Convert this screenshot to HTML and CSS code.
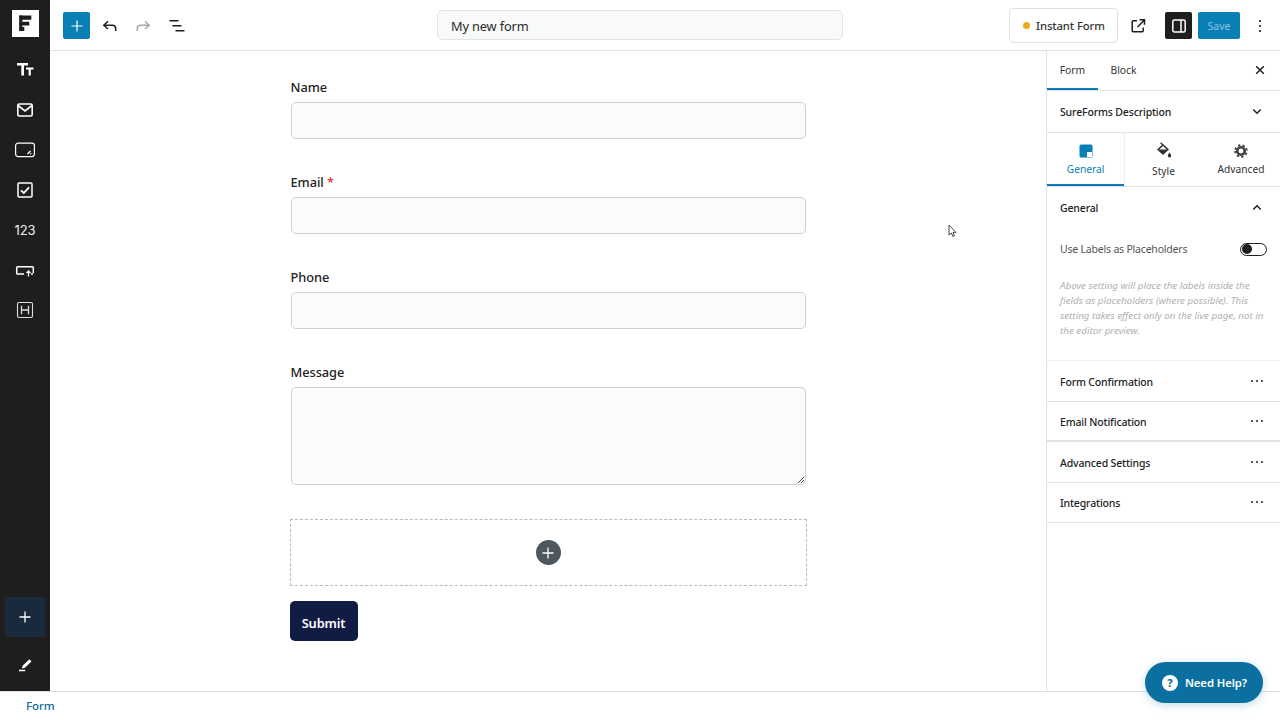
FILE: index.html
```html
<!DOCTYPE html>
<html lang="en">
<head>
<meta charset="utf-8">
<title>My new form</title>
<link rel="stylesheet" href="styles.css">
</head>
<body>
<div class="app">
  <div class="main">
    <nav class="rail">
      <div class="logo"><svg width="27" height="27" viewBox="0 0 27 27"><rect width="27" height="27" fill="#fff"/><path d="M7.300 5.500h12v4.300h-12zM7.300 11.800h10v3.600h-10zM7.300 17h5v4h-5z" fill="#1e1e1e"/><path d="M7.300 5.500h3v15.500h-3z" fill="#1e1e1e"/></svg></div>
      <div class="rail-list">
        <div class="rail-item"><svg class="tt" width="20" height="20" viewBox="0 0 20 20" fill="#fff"><path d="M2 4h11v2.500H9v10H6.300v-10H2z"/><path d="M11 8.500h7.500v2h-2.700v6h-2.200v-6H11z"/></svg></div>
        <div class="rail-item"><svg width="20" height="20" viewBox="0 0 20 20" fill="none" stroke="#fff" stroke-width="1.600"><rect x="2.800" y="4" width="14.400" height="12" rx="1.500"/><path d="M3 5.500l7 5.500 7-5.500"/></svg></div>
        <div class="rail-item"><svg width="20" height="20" viewBox="0 0 20 20" fill="none" stroke="#fff" stroke-width="1.200"><rect x="0.600" y="3.100" width="18.800" height="13.500" rx="2.500"/><path d="M12.500 14l3-3" stroke-width="1.400"/><path d="M15.300 14.300l1-1"/></svg></div>
        <div class="rail-item"><svg width="20" height="20" viewBox="0 0 20 20" fill="none" stroke="#fff" stroke-width="1.500"><rect x="3" y="3" width="14" height="14" rx="1"/><path d="M6 10.300l2.800 2.700L14 7.300" stroke-width="1.800"/></svg></div>
        <div class="rail-item rail-num">123</div>
        <div class="rail-item"><svg width="20" height="20" viewBox="0 0 20 20" fill="none" stroke="#fff" stroke-width="1.500"><path d="M9 14H2.500a.8.800 0 0 1-.8-.8V7.500a.8.800 0 0 1 .8-.8h15a.8.800 0 0 1 .8.800v5.500"/><path d="M13.500 16.500v-5M11.500 13l2-2 2 2M16 14h2" stroke-width="1.300"/></svg></div>
        <div class="rail-item"><svg width="20" height="20" viewBox="0 0 20 20" fill="none" stroke="#ddd" stroke-width="1.100"><rect x="2.500" y="2.500" width="15" height="15" rx="1.500"/><path d="M6.500 5.800v8.400M13.500 5.800v8.400M6.500 10h7" stroke-width="1.300"/></svg></div>
      </div>
      <div class="rail-add"><svg width="14" height="14" viewBox="0 0 14 14" stroke="#fff" stroke-width="1.300"><path d="M7 1.500v11M1.500 7h11"/></svg></div>
      <div class="rail-pen"><svg width="20" height="20" viewBox="0 0 20 20" fill="#fff"><path d="M7.800 10.500l6.700-6.300 2 2.200-6.600 6.400-3 .8zM4 14.800h6.200v1.400H4z"/></svg></div>
    </nav>
    <div class="work">
      <header class="topbar">
        <div class="tools">
          <div class="btn-add"><svg width="14" height="14" viewBox="0 0 14 14" stroke="#fff" stroke-width="1.200"><path d="M7 1.500v11M1.500 7h11"/></svg></div>
          <div class="tool"><svg width="20" height="20" viewBox="0 0 20 20" fill="none" stroke="#1e1e1e" stroke-width="1.500"><path d="M8 5.200L3.800 9.200 8 13"/><path d="M4 9.200h8.500a3.200 3.200 0 0 1 3.200 3.200V15"/></svg></div>
          <div class="tool"><svg width="20" height="20" viewBox="0 0 20 20" fill="none" stroke="#a8a8a8" stroke-width="1.500"><path d="M12 5.200l4.200 4L12 13"/><path d="M16 9.200H7.500a3.200 3.200 0 0 0-3.200 3.200V15"/></svg></div>
          <div class="tool"><svg width="20" height="20" viewBox="0 0 20 20" stroke="#1e1e1e" stroke-width="1.500"><path d="M2.500 4.800h9M5.500 9.800h9M8.500 14.800h9"/></svg></div>
        </div>
        <div class="title">My new form</div>
        <div class="actions">
          <div class="instant"><span class="dot"></span>Instant Form</div>
          <div class="act-ext"><svg width="20" height="20" viewBox="0 0 20 20" fill="none" stroke="#1e1e1e" stroke-width="1.500"><path d="M9 4.800H5.200a1 1 0 0 0-1 1v9a1 1 0 0 0 1 1h9a1 1 0 0 0 1-1V11.500"/><path d="M9.500 11L16 4.500M11.500 3.800h5v5"/></svg></div>
          <div class="act-panel"><svg width="18" height="18" viewBox="0 0 18 18" fill="none" stroke="#fff" stroke-width="1.500"><rect x="2.800" y="3" width="12.400" height="12" rx="1.500"/><path d="M11 3v12"/></svg></div>
          <div class="save">Save</div>
          <div class="more"><svg width="4" height="14" viewBox="0 0 4 14" fill="#1e1e1e"><circle cx="2" cy="2" r="1.100"/><circle cx="2" cy="7" r="1.100"/><circle cx="2" cy="12" r="1.100"/></svg></div>
        </div>
      </header>
      <div class="body">
        <section class="canvas">
          <div class="form">
            <div class="field"><div class="label">Name</div><div class="input"></div></div>
            <div class="field"><div class="label">Email <span class="req">*</span></div><div class="input"></div></div>
            <div class="field"><div class="label">Phone</div><div class="input"></div></div>
            <div class="field field-last"><div class="label">Message</div><div class="input area"><svg class="grip" width="8" height="8" viewBox="0 0 8 8" stroke="#444" stroke-width="1"><path d="M1 7l6-6M4 7l3-3"/></svg></div></div>
            <div class="dropzone"><div class="drop-btn"><svg width="14" height="14" viewBox="0 0 14 14" stroke="#fff" stroke-width="1.300"><path d="M7 1.500v11M1.500 7h11"/></svg></div></div>
            <div class="submit">Submit</div>
          </div>
          <svg class="cursor" width="10" height="14" viewBox="0 0 10 14"><path d="M1 1v10l2.400-2 1.500 3.500 1.500-.7L5 8.400h3z" fill="#fff" stroke="#333" stroke-width=".9"/></svg>
        </section>
        <aside class="panel">
          <div class="ptabs">
            <div class="ptab ptab-on">Form</div>
            <div class="ptab">Block</div>
            <svg class="pclose" width="10" height="10" viewBox="0 0 10 10" stroke="#1e1e1e" stroke-width="1.500"><path d="M1.200 1.200l7.600 7.600M8.800 1.200L1.200 8.800"/></svg>
          </div>
          <div class="prow prow-desc"><span class="prow-t">SureForms Description</span><svg width="10" height="7" viewBox="0 0 12 8" fill="none" stroke="#1e1e1e" stroke-width="1.700"><path d="M1.500 1.500L6 6l4.500-4.500"/></svg></div>
          <div class="stabs">
            <div class="stab stab-on"><svg width="16" height="16" viewBox="0 0 16 16"><rect x="1.500" y="1.500" width="13" height="13" rx="1.500" fill="#0a7fb5"/><rect x="9" y="9" width="5" height="5" fill="#fff"/></svg><span>General</span></div>
            <div class="stab stab-style"><svg width="16" height="18" viewBox="0 0 16 18"><path d="M1 7.500L7 2l6 5.500L7 13z" fill="#333"/><path d="M3.200 7.500L7 4l3.800 3.500z" fill="#fff"/><path d="M4.500 .8L7 3" stroke="#333" stroke-width="1.300"/><path d="M13.500 10.500c1 1.500 1.700 2.400 1.700 3.300a1.700 1.700 0 0 1-3.400 0c0-.9.700-1.800 1.700-3.300z" fill="#333"/></svg><span>Style</span></div>
            <div class="stab stab-adv"><svg class="gear" width="14" height="14" viewBox="0 0 16 16"><circle cx="8" cy="8" r="4.300" fill="none" stroke="#444" stroke-width="3"/><path d="M8 8m-6.600 0a6.600 6.600 0 1 0 13.200 0a6.600 6.600 0 1 0-13.200 0" fill="none" stroke="#444" stroke-width="2.300" stroke-dasharray="2.500 2.700"/></svg><span>Advanced</span></div>
          </div>
          <div class="general">
            <div class="gen-head"><span class="prow-t">General</span><svg width="10" height="7" viewBox="0 0 12 8" fill="none" stroke="#1e1e1e" stroke-width="1.700"><path d="M1.500 6.500L6 2l4.500 4.500"/></svg></div>
            <div class="gen-toggle"><span>Use Labels as Placeholders</span><span class="toggle"><span class="knob"></span></span></div>
            <p class="gen-note">Above setting will place the labels inside the fields as placeholders (where possible). This setting takes effect only on the live page, not in the editor preview.</p>
          </div>
          <div class="prow"><span class="prow-t">Form Confirmation</span><svg class="dots" width="14" height="4" viewBox="0 0 14 4" fill="#333"><circle cx="2" cy="2" r="1.100"/><circle cx="7" cy="2" r="1.100"/><circle cx="12" cy="2" r="1.100"/></svg></div>
          <div class="prow prow-thick"><span class="prow-t">Email Notification</span><svg class="dots" width="14" height="4" viewBox="0 0 14 4" fill="#333"><circle cx="2" cy="2" r="1.100"/><circle cx="7" cy="2" r="1.100"/><circle cx="12" cy="2" r="1.100"/></svg></div>
          <div class="prow"><span class="prow-t">Advanced Settings</span><svg class="dots" width="14" height="4" viewBox="0 0 14 4" fill="#333"><circle cx="2" cy="2" r="1.100"/><circle cx="7" cy="2" r="1.100"/><circle cx="12" cy="2" r="1.100"/></svg></div>
          <div class="prow"><span class="prow-t">Integrations</span><svg class="dots" width="14" height="4" viewBox="0 0 14 4" fill="#333"><circle cx="2" cy="2" r="1.100"/><circle cx="7" cy="2" r="1.100"/><circle cx="12" cy="2" r="1.100"/></svg></div>
        </aside>
      </div>
    </div>
  </div>
  <footer class="footer">Form</footer>
  <div class="help"><span class="help-ico">?</span>Need Help?</div>
</div>
</body>
</html>
```
FILE: styles.css
```css
* { box-sizing: border-box; }
html, body { margin: 0; padding: 0; }
body { font-family: "Noto Sans", "Open Sans", sans-serif; color: #1e1e1e; background: #fff; }
svg { display: block; flex: none; }

.app { position: relative; width: 1280px; height: 720px; display: flex; flex-direction: column; overflow: hidden; }
.main { flex: 1; display: flex; min-height: 0; }

.rail { width: 50px; background: #1e1e1e; display: flex; flex-direction: column; align-items: center; padding-top: 10px; flex: none; }
.logo { width: 27px; height: 27px; margin-bottom: 13px; }
.rail-list { display: flex; flex-direction: column; flex: 1; }
.rail-item { width: 50px; height: 40px; display: flex; align-items: center; justify-content: center; }
.tt { margin-top: -2px; }
.rail-num { color: #eee; font: 400 13px "Inter", sans-serif; }
.rail-add { width: 40px; height: 40px; background: #1a2a3d; display: flex; align-items: center; justify-content: center; }
.rail-pen { height: 44px; margin-top: 6px; margin-bottom: 4px; display: flex; align-items: center; justify-content: center; }

.work { flex: 1; display: flex; flex-direction: column; min-width: 0; }
.topbar { height: 51px; flex: none; border-bottom: 1px solid #e0e0e0; display: flex; align-items: center; padding: 1px 18px 0 13px; }
.tools { width: 374px; flex: none; display: flex; align-items: center; }
.btn-add { width: 27px; height: 27px; background: #0a7fb5; border-radius: 2px; display: flex; align-items: center; justify-content: center; margin-right: 3px; }
.tool { width: 33.500px; display: flex; justify-content: center; }
.title { width: 406px; height: 30px; flex: none; margin-top: -1px; background: #f8f9f9; border: 1px solid #e2e4e4; border-radius: 6px; padding-left: 13px; font-size: 12.800px; letter-spacing: -.15px; line-height: 30px; color: #2a2a2a; }
.actions { flex: 1; display: flex; align-items: center; justify-content: flex-end; }
.instant { height: 35px; width: 109px; border: 1px solid #e0e0e0; border-radius: 4px; display: flex; align-items: center; padding-left: 13px; font-size: 11.300px; letter-spacing: -.1px; font-weight: 500; color: #333; margin-right: 10px; white-space: nowrap; }
.dot { width: 7px; height: 7px; border-radius: 50%; background: #e9ab17; margin-right: 6px; flex: none; }
.act-ext { width: 20px; margin-right: 17px; }
.act-panel { width: 27px; height: 27px; background: #1e1e1e; border-radius: 2px; display: flex; align-items: center; justify-content: center; margin-right: 6px; }
.save { width: 42px; height: 27px; background: #0a7fb5; border-radius: 2px; color: #8fc3dc; font-size: 10.500px; display: flex; align-items: center; justify-content: center; margin-right: 18px; }
.more { width: 4px; }

.body { flex: 1; display: flex; min-height: 0; }
.canvas { position: relative; flex: 1; display: flex; justify-content: center; min-width: 0; }
.form { width: 517px; padding-top: 25px; }
.field { padding: 0 1px; margin-bottom: 32px; }
.field-last { margin-bottom: 34px; }
.label { font-size: 12.800px; letter-spacing: -.05px; font-weight: 500; line-height: 22px; color: #222; margin-bottom: 4px; }
.req { color: #d32f2f; }
.input { height: 37px; background: #fafbfb; border: 1px solid #d0d0d0; border-radius: 5px; }
.area { height: 98px; position: relative; }
.grip { position: absolute; right: 0; bottom: 0; }
.dropzone { height: 67px; border: 1px dashed #bbb; display: flex; align-items: center; justify-content: center; margin-bottom: 15px; }
.drop-btn { width: 25px; height: 25px; border-radius: 50%; background: #50565e; display: flex; align-items: center; justify-content: center; }
.submit { width: 68px; height: 40px; background: #111c44; color: #fff; border-radius: 5px; font-size: 12.800px; letter-spacing: -.1px; font-weight: 600; display: flex; align-items: center; justify-content: center; padding-top: 3px; }
.cursor { position: absolute; left: 898px; top: 173px; }

.panel { width: 234px; flex: none; border-left: 1px solid #e0e0e0; display: flex; flex-direction: column; }
.ptabs { height: 40px; border-bottom: 1px solid #e0e0e0; display: flex; align-items: stretch; position: relative; flex: none; }
.ptab { width: 51px; padding-bottom: 2px; font-size: 10.300px; color: #333; display: flex; align-items: center; justify-content: center; }
.ptab-on { box-shadow: inset 0 -2px 0 #0a7fb5; }
.pclose { position: absolute; right: 15px; top: 14px; }
.prow { height: 40.500px; border-bottom: 1px solid #e4e4e4; display: flex; align-items: center; justify-content: space-between; padding: 2px 16px 0 13px; flex: none; }
.prow-desc { height: 42px; padding: 0 18px 0 13px; }
.prow-thick { border-bottom-width: 2px; }
.prow-t { font-size: 10.500px; letter-spacing: -.15px; font-weight: 500; color: #222; }
.dots { margin-top: -2px; }
.stabs { height: 54px; display: flex; border-bottom: 1px solid #e0e0e0; flex: none; }
.stab { width: 78px; display: flex; flex-direction: column; align-items: center; padding-top: 10px; gap: 3px; font-size: 10.200px; color: #333; }
.stab-on { width: 77px; color: #0a7fb5; box-shadow: inset 0 -2px 0 #0a7fb5; }
.stab-style { padding-top: 9px; gap: 4px; border-left: 1px solid #eee; }
.gear { margin: 1px 0; }
.general { height: 174px; border-bottom: 1px solid #f0f0f0; flex: none; padding: 0 13px; }
.gen-head { height: 41px; display: flex; align-items: center; justify-content: space-between; padding-right: 5px; }
.gen-toggle { height: 16px; margin-top: 13px; display: flex; align-items: center; justify-content: space-between; font-size: 10.500px; letter-spacing: -.2px; color: #555; }
.toggle { width: 27px; height: 13px; border: 1px solid #1e1e1e; border-radius: 7px; display: flex; align-items: center; padding-left: 1px; }
.knob { width: 10px; height: 10px; background: #1e1e1e; border-radius: 50%; }
.gen-note { margin: 21px 0 0; font-size: 9.800px; line-height: 15px; font-style: italic; color: #b0b0b0; }

.footer { height: 29px; flex: none; border-top: 1px solid #e0e0e0; padding-left: 26px; font-size: 11.500px; letter-spacing: -.1px; font-weight: 500; line-height: 27px; color: #0f6a9a; }
.help { position: absolute; left: 1145px; top: 662px; width: 118px; height: 41px; border-radius: 21px; background: #0b6fa0; color: #fff; display: flex; align-items: center; padding-left: 17px; font-size: 11.300px; letter-spacing: -.1px; font-weight: 600; box-shadow: 0 2px 8px rgba(11,111,160,.25); }
.help-ico { width: 16px; height: 16px; border-radius: 50%; background: #fff; color: #0b6fa0; display: flex; align-items: center; justify-content: center; font-size: 11px; font-weight: 800; margin-right: 7px; }
```
